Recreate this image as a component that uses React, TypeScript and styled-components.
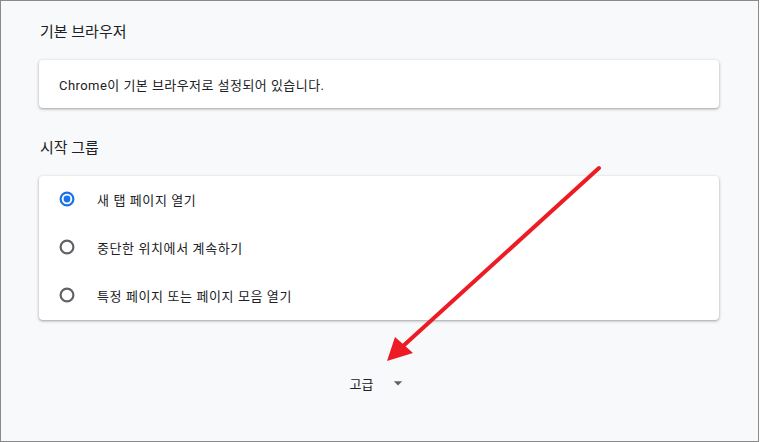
import { createGlobalStyle, styled } from "styled-components";

type TOption = {
  label: string;
  checked: boolean;
};

const StartupOptions: TOption[] = [
  { label: "새 탭 페이지 열기", checked: true },
  { label: "중단한 위치에서 계속하기", checked: false },
  { label: "특정 페이지 또는 페이지 모음 열기", checked: false },
];

const GlobalStyle = createGlobalStyle`
  html, body {
    margin: 0;
    padding: 0;
    background: #ffffff;
  }
  body {
    font-family: Roboto, "Noto Sans CJK KR", "Noto Sans", sans-serif;
    color: #202124;
  }
`;

const Radio = ({ checked }: { checked: boolean }) => (
  <RadioIcon viewBox="0 0 16 16" width={16} height={16}>
    <circle
      cx="8"
      cy="8"
      r="6.4"
      fill="none"
      stroke={checked ? "#1a73e8" : "#5f6368"}
      strokeWidth="2.2"
    />
    {checked && <circle cx="8" cy="8" r="3.4" fill="#1a73e8" />}
  </RadioIcon>
);

const App = () => {
  return (
    <Frame>
      <GlobalStyle />
      <Column>
        <SectionTitle $top={21} $bottom={18}>
          기본 브라우저
        </SectionTitle>
        <Card>
          <InfoRow>Chrome이 기본 브라우저로 설정되어 있습니다.</InfoRow>
        </Card>

        <SectionTitle $top={30} $bottom={18}>
          시작 그룹
        </SectionTitle>
        <Card>
          {StartupOptions.map((option, index) => (
            <OptionRow key={index}>
              <Radio checked={option.checked} />
              <OptionLabel>{option.label}</OptionLabel>
            </OptionRow>
          ))}
        </Card>

        <AdvancedButton>
          고급
          <DropIcon viewBox="0 0 24 24" width={20} height={20}>
            <path d="M7 10l5 5 5-5z" fill="#5f6368" />
          </DropIcon>
        </AdvancedButton>
      </Column>

      <Annotation viewBox="0 0 760 442" width={760} height={442}>
        <line
          x1="599"
          y1="168"
          x2="402"
          y2="347"
          stroke="#ed1c24"
          strokeWidth="4"
          strokeLinecap="round"
        />
        <polygon points="387,361 395,337 413,353" fill="#ed1c24" />
      </Annotation>
    </Frame>
  );
};

const Frame = styled.div`
  position: relative;
  box-sizing: border-box;
  width: 759px;
  height: 442px;
  border: 1px solid #8a8a8a;
  background: #f8f9fa;
  overflow: hidden;
`;

const Column = styled.div`
  display: flex;
  flex-direction: column;
  width: 680px;
  margin-left: 38px;
`;

const SectionTitle = styled.h2<{ $top: number; $bottom: number }>`
  margin: 0;
  padding: ${({ $top, $bottom }) => `${$top}px 0 ${$bottom}px 1px`};
  font-size: 15px;
  font-weight: 400;
  line-height: 20px;
  color: #202124;
`;

const Card = styled.div`
  background: #ffffff;
  border-radius: 4px;
  box-shadow: 0 1px 2px rgba(60, 64, 67, 0.3),
    0 1px 3px 1px rgba(60, 64, 67, 0.15);
`;

const InfoRow = styled.div`
  display: flex;
  align-items: center;
  height: 48px;
  padding: 0 20px;
  font-size: 13px;
  letter-spacing: 0.45px;
  color: #202124;
`;

const OptionRow = styled.div`
  display: flex;
  align-items: center;
  height: 48px;
  padding: 0 20px;
`;

const RadioIcon = styled.svg`
  display: block;
  flex: none;
  margin-top: -2px;
`;

const OptionLabel = styled.span`
  margin-left: 22px;
  margin-top: -2px;
  font-size: 13px;
  letter-spacing: 0.6px;
  color: #202124;
`;

const AdvancedButton = styled.div`
  display: flex;
  align-items: center;
  justify-content: center;
  margin-top: 53px;
  height: 20px;
  font-size: 13px;
  color: #202124;
`;

const DropIcon = styled.svg`
  display: block;
  margin-left: 15px;
`;

const Annotation = styled.svg`
  position: absolute;
  left: -1px;
  top: -1px;
  pointer-events: none;
`;

export default App;
